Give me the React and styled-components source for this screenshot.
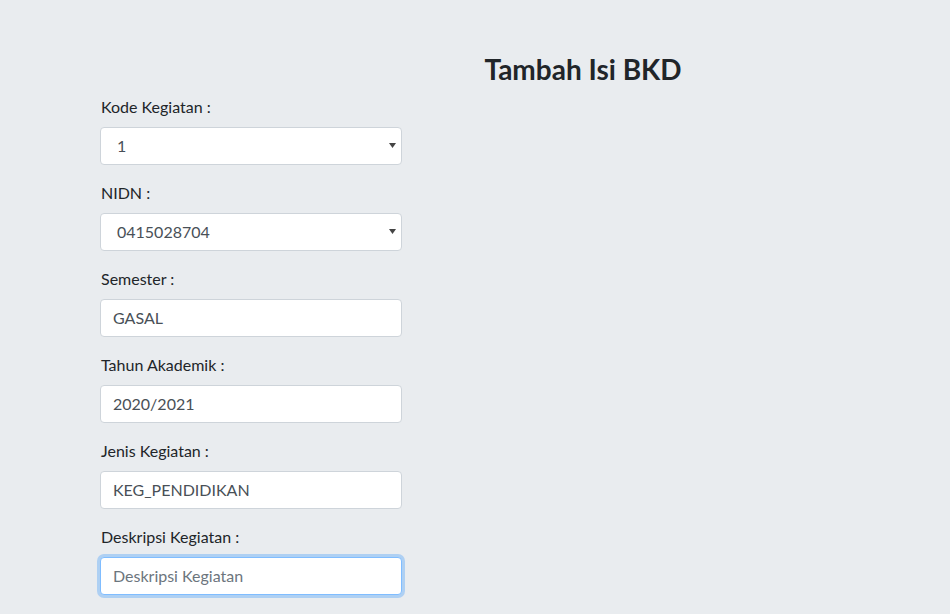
import styled, { createGlobalStyle } from "styled-components";

const GlobalStyle = createGlobalStyle`
  html, body {
    margin: 0;
    background: #e9ecef;
    font-family: "Lato", "Noto Sans", sans-serif;
    color: #212529;
  }
  * {
    box-sizing: border-box;
  }
`;

const Page = styled.div`
  padding: 53px 0 0 100px;
`;

const Title = styled.h3`
  margin: 0 0 8px;
  padding-left: 116px;
  text-align: center;
  font-size: 28px;
  font-weight: 700;
  line-height: 1.2;
  color: #212529;
`;

const Form = styled.form`
  width: 302px;
`;

const Group = styled.div`
  margin-bottom: 16px;
`;

const Label = styled.label`
  display: block;
  margin: 0 0 8px 1px;
  font-size: 16px;
  line-height: 24px;
`;

const SelectWrap = styled.div`
  position: relative;
`;

const fieldCss = `
  display: block;
  width: 100%;
  height: 38px;
  padding: 6px 12px;
  font-family: inherit;
  font-size: 16px;
  line-height: 24px;
  color: #495057;
  background: #fff;
  border: 1px solid #ced4da;
  border-radius: 4px;
  outline: none;
`;

const Select = styled.select`
  ${fieldCss}
  appearance: none;
  padding-left: 16px;
`;

const Arrow = styled.svg`
  position: absolute;
  right: 6px;
  top: 16px;
  pointer-events: none;
`;

const Input = styled.input`
  ${fieldCss}
  border-color: ${(p) => (p.$focused ? "#80bdff" : "#ced4da")};
  box-shadow: ${(p) =>
    p.$focused ? "0 0 0 3px rgba(0, 123, 255, 0.25)" : "none"};

  &::placeholder {
    color: #6c757d;
  }
`;

const SelectField = ({ label, value }) => (
  <Group>
    <Label>{label}</Label>
    <SelectWrap>
      <Select defaultValue={value}>
        <option value={value}>{value}</option>
      </Select>
      <Arrow width="7" height="5" viewBox="0 0 7 5">
        <path d="M0 0h7L3.5 5z" fill="#444" />
      </Arrow>
    </SelectWrap>
  </Group>
);

const TextField = ({ label, value, placeholder, focused }) => (
  <Group>
    <Label>{label}</Label>
    <Input
      defaultValue={value}
      placeholder={placeholder}
      $focused={focused}
      autoFocus={focused}
    />
  </Group>
);

export default function App() {
  return (
    <>
      <GlobalStyle />
      <Page>
        <Title>Tambah Isi BKD</Title>
        <Form>
          <SelectField label="Kode Kegiatan :" value="1" />
          <SelectField label="NIDN :" value="0415028704" />
          <TextField label="Semester :" value="GASAL" />
          <TextField label="Tahun Akademik :" value="2020/2021" />
          <TextField label="Jenis Kegiatan :" value="KEG_PENDIDIKAN" />
          <TextField
            label="Deskripsi Kegiatan :"
            placeholder="Deskripsi Kegiatan"
            focused
          />
        </Form>
      </Page>
    </>
  );
}
